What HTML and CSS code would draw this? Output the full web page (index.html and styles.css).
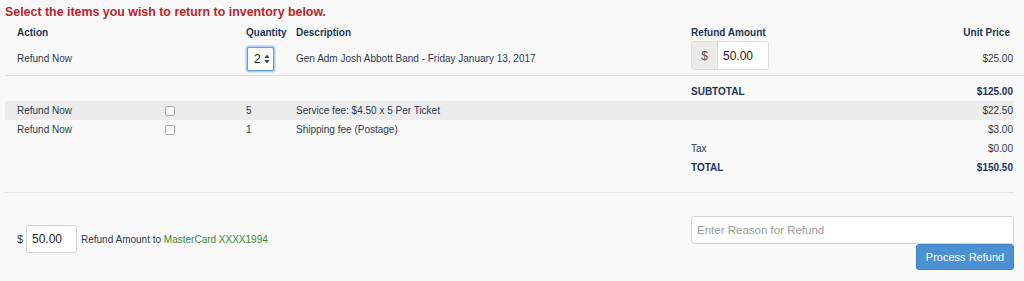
FILE: index.html
```html
<!DOCTYPE html>
<html>
<head>
<meta charset="utf-8">
<link rel="stylesheet" href="styles.css">
</head>
<body>
<div class="page">
  <h1 class="title">Select the items you wish to return to inventory below.</h1>

  <div class="grid head">
    <div class="c1">Action</div>
    <div class="c2"></div>
    <div class="c3">Quantity</div>
    <div class="c4">Description</div>
    <div class="c5">Refund Amount</div>
    <div class="c6 hdr-right">Unit Price</div>
  </div>

  <div class="grid row-main">
    <div class="c1">Refund Now</div>
    <div class="c2"></div>
    <div class="c3"><span class="qty">2<svg class="spin" width="6" height="10" viewBox="0 0 6 10"><path d="M3 0.5 L5.6 4 H0.4 Z M3 9.5 L5.6 6 H0.4 Z" fill="#444"/></svg></span></div>
    <div class="c4">Gen Adm Josh Abbott Band - Friday January 13, 2017</div>
    <div class="c5"><span class="igroup"><span class="addon">$</span><span class="ival">50.00</span></span></div>
    <div class="c6">$25.00</div>
  </div>

  <div class="divider"></div>

  <div class="totals">
    <div class="grid row">
      <div class="c1"></div><div class="c2"></div><div class="c3"></div><div class="c4"></div>
      <div class="c5 strong">SUBTOTAL</div>
      <div class="c6 strong">$125.00</div>
    </div>
    <div class="grid row stripe">
      <div class="c1">Refund Now</div>
      <div class="c2"><span class="cb"></span></div>
      <div class="c3">5</div>
      <div class="c4">Service fee: $4.50 x 5 Per Ticket</div>
      <div class="c5"></div>
      <div class="c6">$22.50</div>
    </div>
    <div class="grid row">
      <div class="c1">Refund Now</div>
      <div class="c2"><span class="cb"></span></div>
      <div class="c3">1</div>
      <div class="c4">Shipping fee (Postage)</div>
      <div class="c5"></div>
      <div class="c6">$3.00</div>
    </div>
    <div class="grid row">
      <div class="c1"></div><div class="c2"></div><div class="c3"></div><div class="c4"></div>
      <div class="c5">Tax</div>
      <div class="c6">$0.00</div>
    </div>
    <div class="grid row">
      <div class="c1"></div><div class="c2"></div><div class="c3"></div><div class="c4"></div>
      <div class="c5 strong">TOTAL</div>
      <div class="c6 strong">$150.50</div>
    </div>
  </div>

  <div class="divider2"></div>

  <div class="footer">
    <div class="refund-line">
      <span class="dollar">$</span>
      <span class="amt">50.00</span>
      <span class="to">Refund Amount to <span class="card">MasterCard XXXX1994</span></span>
    </div>
    <div class="reason-box">
      <div class="reason">Enter Reason for Refund</div>
      <button class="btn">Process Refund</button>
    </div>
  </div>
</div>
</body>
</html>
```

FILE: styles.css
```css
html, body {
  margin: 0;
  padding: 0;
  background: #f9f9f9;
}
body {
  font-family: "Liberation Sans", Arial, sans-serif;
  font-size: 10px;
  color: #2b3a4e;
}
.page {
  padding: 0 0 0 5px;
  height: 281px;
  overflow: hidden;
}
.title {
  margin: 0;
  padding-top: 4px;
  height: 19px;
  font-size: 12.4px;
  line-height: 16px;
  font-weight: bold;
  color: #b8232a;
}
.grid {
  display: grid;
  grid-template-columns: 160px 81px 50px 395px 1fr auto;
  width: 1009px;
  align-items: center;
}
.c1 { padding-left: 12px; }
.c6 { text-align: right; padding-right: 1px; }
.head {
  height: 18px;
  font-weight: bold;
  color: #1d3557;
}
.head .hdr-right { padding-right: 4px; }
.row-main {
  height: 34px;
}
.qty {
  display: inline-flex;
  align-items: center;
  gap: 3px;
  width: 16px;
  height: 22px;
  padding: 0 3px 0 6px;
  margin-top: 2px;
  margin-left: 1px;
  border: 1px solid #5f9fdc;
  box-shadow: 0 0 0 1.5px #aacdf0;
  border-radius: 2px;
  background: #fff;
  font-size: 12px;
  color: #222;
}
.spin { display: block; }
.igroup {
  display: inline-flex;
  height: 27px;
  margin-top: -5px;
  border: 1px solid #ddd;
  border-radius: 3px;
  overflow: hidden;
}
.addon {
  width: 25px;
  background: #ebebeb;
  border-right: 1px solid #ddd;
  display: flex;
  align-items: center;
  justify-content: center;
  font-size: 12px;
  color: #555;
}
.ival {
  width: 45px;
  background: #fff;
  display: flex;
  align-items: center;
  padding-left: 5px;
  font-size: 12px;
  color: #222;
}
.divider {
  height: 1px;
  background: #dcdcdc;
  width: 1019px;
}
.totals {
  padding-top: 6px;
}
.row {
  height: 19px;
}
.stripe {
  background: #ececec;
}
.strong {
  font-weight: bold;
  color: #1d3557;
}
.cb {
  display: block;
  width: 8px;
  height: 8px;
  margin-left: 0;
  border: 1px solid #a8a8a8;
  border-radius: 2px;
  background: #fff;
}
.divider2 {
  height: 1px;
  background: #e8e8e8;
  width: 1009px;
  margin-top: 15px;
}
.footer {
  display: flex;
  justify-content: space-between;
  width: 1009px;
  padding-top: 23px;
}
.refund-line {
  display: flex;
  align-items: center;
  padding-left: 12px;
  margin-top: 9px;
  height: 28px;
}
.dollar {
  width: 9px;
  font-size: 11px;
}
.amt {
  box-sizing: border-box;
  width: 51px;
  height: 28px;
  border: 1px solid #d4d4d4;
  border-radius: 3px;
  background: #fff;
  display: flex;
  align-items: center;
  padding-left: 5px;
  font-size: 12px;
  color: #222;
  margin-right: 4px;
}
.card { color: #3a8a30; }
.reason-box {
  display: flex;
  flex-direction: column;
  align-items: flex-end;
  width: 323px;
}
.reason {
  box-sizing: border-box;
  width: 323px;
  height: 28px;
  border: 1px solid #d6d6d6;
  border-radius: 3px;
  background: #fff;
  color: #999;
  font-size: 11.5px;
  display: flex;
  align-items: center;
  padding-left: 5px;
}
.btn {
  box-sizing: border-box;
  width: 98px;
  height: 26px;
  border: 1px solid #3f84c4;
  border-radius: 3px;
  background: #4a90d2;
  color: #fff;
  font-family: "Liberation Sans", Arial, sans-serif;
  font-size: 11px;
  padding: 0;
}
```
